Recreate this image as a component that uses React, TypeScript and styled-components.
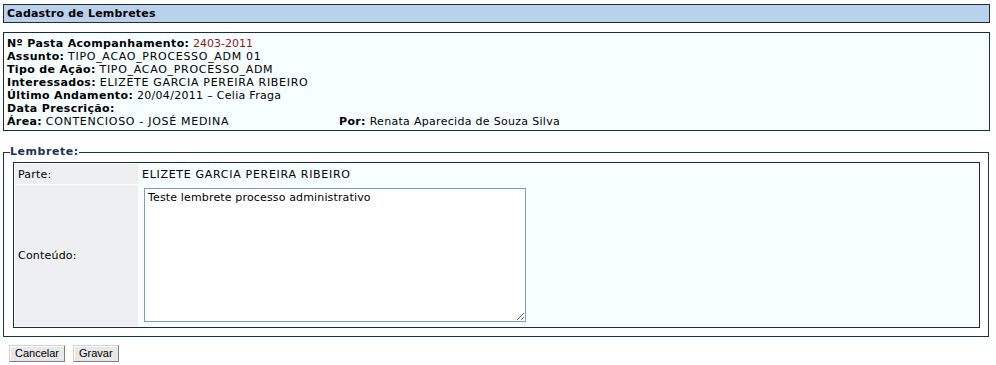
import React from "react";
import styled, { createGlobalStyle } from "styled-components";

const GlobalStyle = createGlobalStyle`
  html, body {
    margin: 0;
    padding: 0;
    background: #ffffff;
  }
  body {
    font-family: "DejaVu Sans", Verdana, sans-serif;
    font-size: 11px;
    letter-spacing: 0.3px;
    color: #000000;
  }
`;

const Page = styled.div`
  padding: 4px 6px 0 3px;
`;

const TitleBar = styled.div`
  border: 1px solid #1c2b40;
  background: #b9d1eb;
  height: 17px;
  line-height: 17px;
  padding-left: 3px;
  font-weight: bold;
  letter-spacing: 0.2px;
`;

const InfoBox = styled.div`
  margin-top: 9px;
  border: 1px solid #1c2b40;
  background: #f6feff;
  padding: 4px 3px 2px;
  line-height: 13px;
`;

const InfoLine = styled.div`
  display: flex;
  white-space: nowrap;
`;

const InfoCell = styled.div<{ $width?: number }>`
  ${(p) => (p.$width ? `width: ${p.$width}px; flex: none;` : "flex: 1;")}
`;

const Key = styled.b`
  font-weight: bold;
  letter-spacing: 0.35px;
`;

const Caps = styled.span`
  letter-spacing: 0.7px;
`;

const Red = styled.span`
  color: #9a1414;
  letter-spacing: 0;
`;

const Fieldset = styled.fieldset`
  margin: 14px 1px 0 0;
  padding: 3px 8px 8px 9px;
  border: 1px solid #103c3a;
  min-width: 0;
`;

const Legend = styled.legend`
  margin-left: -3px;
  padding: 0;
  font-weight: bold;
  color: #1b3352;
  line-height: 14px;
  letter-spacing: 0.55px;
`;

const FormTable = styled.div`
  border: 1px solid #1c2b40;
  background: #f6feff;
  display: grid;
  grid-template-columns: 123px 1fr;
  gap: 1px;
  padding: 1px;
`;

const LabelCell = styled.div`
  background: #eeeff1;
  padding: 0 3px;
  display: flex;
  align-items: center;
  min-height: 20px;
  letter-spacing: 0.2px;
`;

const ValueCell = styled.div`
  padding: 0 3px;
  display: flex;
  align-items: center;
  min-height: 20px;
`;

const AreaCell = styled.div`
  padding: 3px 3px 4px 5px;
`;

const TextArea = styled.textarea`
  display: block;
  margin: 0;
  width: 382px;
  height: 134px;
  box-sizing: border-box;
  border: 1px solid #7f9db9;
  padding: 2px 3px;
  font-family: "DejaVu Sans", Verdana, sans-serif;
  font-size: 11px;
  line-height: 13px;
  letter-spacing: 0.15px;
  color: #000;
  background: #ffffff;
  outline: none;
`;

const ButtonRow = styled.div`
  display: flex;
  gap: 8px;
  margin: 8px 0 0 6px;
`;

const Button = styled.button`
  height: 17px;
  padding: 0 5px;
  margin: 0;
  font-family: "Liberation Sans", Tahoma, sans-serif;
  font-size: 11px;
  letter-spacing: 0;
  line-height: 15px;
  color: #000;
  background: #e8e8e8;
  border: 1px solid;
  border-color: #d4d4d4 #808080 #808080 #d4d4d4;
  box-shadow: inset 1px 1px 0 #ffffff;
  border-radius: 0;
`;

export default function App() {
  return (
    <>
      <GlobalStyle />
      <Page>
        <TitleBar>Cadastro de Lembretes</TitleBar>
        <InfoBox>
          <InfoLine>
            <Key>Nº Pasta Acompanhamento:</Key>&nbsp;<Red>2403-2011</Red>
          </InfoLine>
          <InfoLine>
            <Key>Assunto:</Key>&nbsp;<Caps>TIPO_ACAO_PROCESSO_ADM 01</Caps>
          </InfoLine>
          <InfoLine>
            <Key>Tipo de Ação:</Key>&nbsp;<Caps>TIPO_ACAO_PROCESSO_ADM</Caps>
          </InfoLine>
          <InfoLine>
            <Key>Interessados:</Key>&nbsp;<Caps>ELIZETE GARCIA PEREIRA RIBEIRO</Caps>
          </InfoLine>
          <InfoLine>
            <Key>Último Andamento:</Key>&nbsp;20/04/2011 – Celia Fraga
          </InfoLine>
          <InfoLine>
            <Key>Data Prescrição:</Key>
          </InfoLine>
          <InfoLine>
            <InfoCell $width={332}>
              <Key>Área:</Key> <Caps>CONTENCIOSO - JOSÉ MEDINA</Caps>
            </InfoCell>
            <InfoCell>
              <Key>Por:</Key> Renata Aparecida de Souza Silva
            </InfoCell>
          </InfoLine>
        </InfoBox>
        <Fieldset>
          <Legend>Lembrete:</Legend>
          <FormTable>
            <LabelCell>Parte:</LabelCell>
            <ValueCell>
              <Caps>ELIZETE GARCIA PEREIRA RIBEIRO</Caps>
            </ValueCell>
            <LabelCell>Conteúdo:</LabelCell>
            <AreaCell>
              <TextArea defaultValue="Teste lembrete processo administrativo" />
            </AreaCell>
          </FormTable>
        </Fieldset>
        <ButtonRow>
          <Button type="button">Cancelar</Button>
          <Button type="button">Gravar</Button>
        </ButtonRow>
      </Page>
    </>
  );
}
